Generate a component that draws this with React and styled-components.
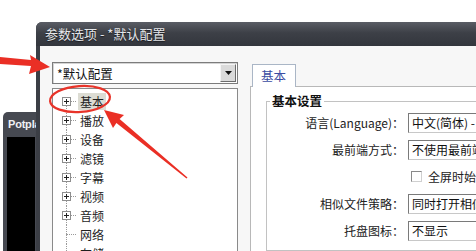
import React from "react";
import styled, { createGlobalStyle } from "styled-components";

const GlobalStyle = createGlobalStyle`
  html, body { margin: 0; padding: 0; background: #ffffff; overflow: hidden; }
  body { font-family: "Noto Sans CJK SC", "Liberation Sans", sans-serif; }
`;

const Desktop = styled.div`
  position: relative;
  width: 476px;
  height: 251px;
  overflow: hidden;
  display: flex;
  align-items: flex-start;
  background: #ffffff;
`;

const PotWindow = styled.div`
  flex: none;
  width: 33px;
  height: 139px;
  margin: 112px 0 0 3px;
  background: #464951;
  border-radius: 5px 0 0 0;
  display: flex;
  flex-direction: column;
`;

const PotTitle = styled.div`
  height: 25px;
  padding-left: 5px;
  color: #eef0f4;
  font: bold 11px/25px "Liberation Sans", sans-serif;
  letter-spacing: -0.2px;
  white-space: nowrap;
  overflow: hidden;
`;

const PotScreen = styled.div`
  flex: 1;
  margin: 0 1px 0 4px;
  background: #000000;
`;

const Dialog = styled.div`
  flex: none;
  width: 520px;
  height: 240px;
  margin-top: 22px;
  background: #3b3e45;
  border-radius: 6px 6px 0 0;
  display: flex;
  flex-direction: column;
`;

const TitleBar = styled.div`
  height: 24px;
  padding-left: 9px;
  border-radius: 6px 6px 0 0;
  background: linear-gradient(#5a5d65, #3d4047 45%, #33363d);
  color: #e4e6ea;
  font-size: 13px;
  line-height: 24px;
  text-shadow: 0 1px 1px #1a1b1f;
  white-space: nowrap;
`;

const Body = styled.div`
  flex: 1;
  margin-left: 4px;
  background: #f7f7f7;
  display: flex;
  gap: 12px;
  padding: 16px 0 0 12px;
`;

const LeftCol = styled.div`
  flex: none;
  width: 186px;
  display: flex;
  flex-direction: column;
  gap: 4px;
`;

const Combo = styled.div`
  box-sizing: border-box;
  height: 22px;
  display: flex;
  align-items: center;
  background: #ffffff;
  border: 1px solid #7c7c7c;
  box-shadow: inset 1px 1px 0 #d4d4d4;
`;

const ComboText = styled.span`
  flex: 1;
  padding-left: 4px;
  font-size: 12.5px;
  color: #111;
  white-space: nowrap;
`;

const DropButton = styled.span`
  box-sizing: border-box;
  width: 16px;
  height: 18px;
  margin-right: 1px;
  display: flex;
  align-items: center;
  justify-content: center;
  background: #dadada;
  border-top: 1px solid #f4f4f4;
  border-left: 1px solid #f4f4f4;
  border-right: 1px solid #6c6c6c;
  border-bottom: 1px solid #6c6c6c;
`;

const TreeBox = styled.div`
  flex: 1;
  background: #ffffff;
  border: 1px solid #8a8a8a;
  padding: 3px 0 0 9px;
`;

const TreeRow = styled.div`
  height: 19px;
  display: flex;
  align-items: center;
`;

const Joint = styled.span`
  position: relative;
  flex: none;
  width: 14px;
  height: 19px;
  display: flex;
  align-items: center;
  &::before {
    content: "";
    position: absolute;
    left: 4px;
    top: ${(p) => (p.$first ? "9px" : "0")};
    bottom: 0;
    border-left: 1px dotted #9a9a9a;
  }
`;

const Expander = styled.span`
  position: relative;
  z-index: 1;
  box-sizing: border-box;
  width: 9px;
  height: 9px;
  border: 1px solid #8e8e8e;
  background: #ffffff;
  &::before {
    content: "";
    position: absolute;
    left: 1px;
    top: 3px;
    width: 5px;
    height: 1px;
    background: #222;
  }
  &::after {
    content: "";
    position: absolute;
    left: 3px;
    top: 1px;
    width: 1px;
    height: 5px;
    background: #222;
  }
`;

const Stub = styled.span`
  width: ${(p) => (p.$leaf ? "10px" : "5px")};
  margin-left: ${(p) => (p.$leaf ? "4px" : "0")};
  border-top: 1px dotted #9a9a9a;
  align-self: center;
`;

const TreeLabel = styled.span`
  margin-left: 2px;
  padding: 1px 2px;
  font-size: 12px;
  line-height: 15px;
  color: #1e1e1e;
  background: ${(p) => (p.$selected ? "#dcdcd3" : "transparent")};
`;

const RightCol = styled.div`
  flex: 1;
  padding-top: 2px;
  display: flex;
  flex-direction: column;
`;

const TabStrip = styled.div`
  display: flex;
  padding-left: 2px;
  position: relative;
  z-index: 1;
`;

const Tab = styled.div`
  box-sizing: border-box;
  width: 44px;
  height: 23px;
  margin-bottom: -1px;
  padding-left: 8px;
  background: #ffffff;
  border: 1px solid #aab6c6;
  border-bottom: none;
  color: #3a4ca2;
  font-size: 12.5px;
  line-height: 22px;
`;

const TabPanel = styled.div`
  flex: 1;
  background: #ffffff;
  border: 1px solid #b8b8b8;
  border-right: none;
  padding: 7px 0 0 15px;
`;

const Group = styled.fieldset`
  margin: 0;
  min-width: 0;
  padding: 1px 0 6px 0;
  border: 1px solid #c2c2c2;
  border-right: none;
  box-shadow: inset 1px 1px 0 #ffffff;
  display: grid;
  grid-template-columns: 137px 1fr;
  grid-auto-rows: 27px;
  column-gap: 4px;
  align-items: center;
`;

const Legend = styled.legend`
  margin-left: 3px;
  padding: 0 2px;
  font-size: 12.5px;
  line-height: 14px;
  font-weight: 600;
  color: #111;
`;

const FieldLabel = styled.span`
  text-align: right;
  font-size: 12px;
  color: #222;
  white-space: nowrap;
`;

const Field = styled.div`
  box-sizing: border-box;
  width: 130px;
  height: 20px;
  padding-left: 3px;
  background: #ffffff;
  border: 1px solid #7a7a7a;
  border-right-color: #c8c8c8;
  border-bottom-color: #c8c8c8;
  font-size: 12px;
  line-height: 18px;
  color: #111;
  white-space: nowrap;
  overflow: hidden;
`;

const CheckLine = styled.label`
  grid-column: 2;
  display: flex;
  align-items: center;
  gap: 6px;
  padding-left: 3px;
  font-size: 12px;
  color: #222;
  white-space: nowrap;
`;

const CheckBox = styled.span`
  box-sizing: border-box;
  width: 11px;
  height: 11px;
  background: #ffffff;
  border: 1px solid #8a8a8a;
  border-right-color: #d0d0d0;
  border-bottom-color: #d0d0d0;
`;

const Marks = styled.svg`
  position: absolute;
  left: 0;
  top: 0;
  width: 476px;
  height: 251px;
  pointer-events: none;
  z-index: 5;
`;

const treeItems = [
  { label: "基本", expand: true, selected: true },
  { label: "播放", expand: true },
  { label: "设备", expand: true },
  { label: "滤镜", expand: true },
  { label: "字幕", expand: true },
  { label: "视频", expand: true },
  { label: "音频", expand: true },
  { label: "网络", expand: false },
  { label: "存储", expand: false },
];

export default function App() {
  return (
    <>
      <GlobalStyle />
      <Desktop>
        <PotWindow>
          <PotTitle>Potplayer</PotTitle>
          <PotScreen />
        </PotWindow>
        <Dialog>
          <TitleBar>参数选项 - *默认配置</TitleBar>
          <Body>
            <LeftCol>
              <Combo>
                <ComboText>*默认配置</ComboText>
                <DropButton>
                  <svg width="7" height="4" viewBox="0 0 7 4">
                    <polygon points="0,0 7,0 3.5,4" fill="#111" />
                  </svg>
                </DropButton>
              </Combo>
              <TreeBox>
                {treeItems.map((it, i) => (
                  <TreeRow key={it.label}>
                    <Joint $first={i === 0}>
                      {it.expand ? <Expander /> : null}
                      {it.expand ? <Stub /> : <Stub $leaf />}
                    </Joint>
                    <TreeLabel $selected={it.selected}>{it.label}</TreeLabel>
                  </TreeRow>
                ))}
              </TreeBox>
            </LeftCol>
            <RightCol>
              <TabStrip>
                <Tab>基本</Tab>
              </TabStrip>
              <TabPanel>
                <Group>
                  <Legend>基本设置</Legend>
                  <FieldLabel>语言(Language)：</FieldLabel>
                  <Field>中文(简体) - Chinese</Field>
                  <FieldLabel>最前端方式：</FieldLabel>
                  <Field>不使用最前端显示</Field>
                  <CheckLine>
                    <CheckBox />
                    全屏时始终最前端显示
                  </CheckLine>
                  <FieldLabel>相似文件策略：</FieldLabel>
                  <Field>同时打开相似文件</Field>
                  <FieldLabel>托盘图标：</FieldLabel>
                  <Field>不显示</Field>
                </Group>
              </TabPanel>
            </RightCol>
          </Body>
        </Dialog>
        <Marks viewBox="0 0 476 251">
          <polygon
            points="0,57 31,60 30,55 50,67 29,74 31,66 0,64"
            fill="#ea2f25"
          />
          <ellipse
            cx="80"
            cy="99"
            rx="30"
            ry="13"
            fill="none"
            stroke="#e8342a"
            strokeWidth="2.2"
            transform="rotate(-4 80 99)"
          />
          <polygon
            points="104,110 124,115 119.6,119.1 187.5,177.4 186.5,178.6 116.4,122.9 113,128"
            fill="#ea2f25"
          />
        </Marks>
      </Desktop>
    </>
  );
}
